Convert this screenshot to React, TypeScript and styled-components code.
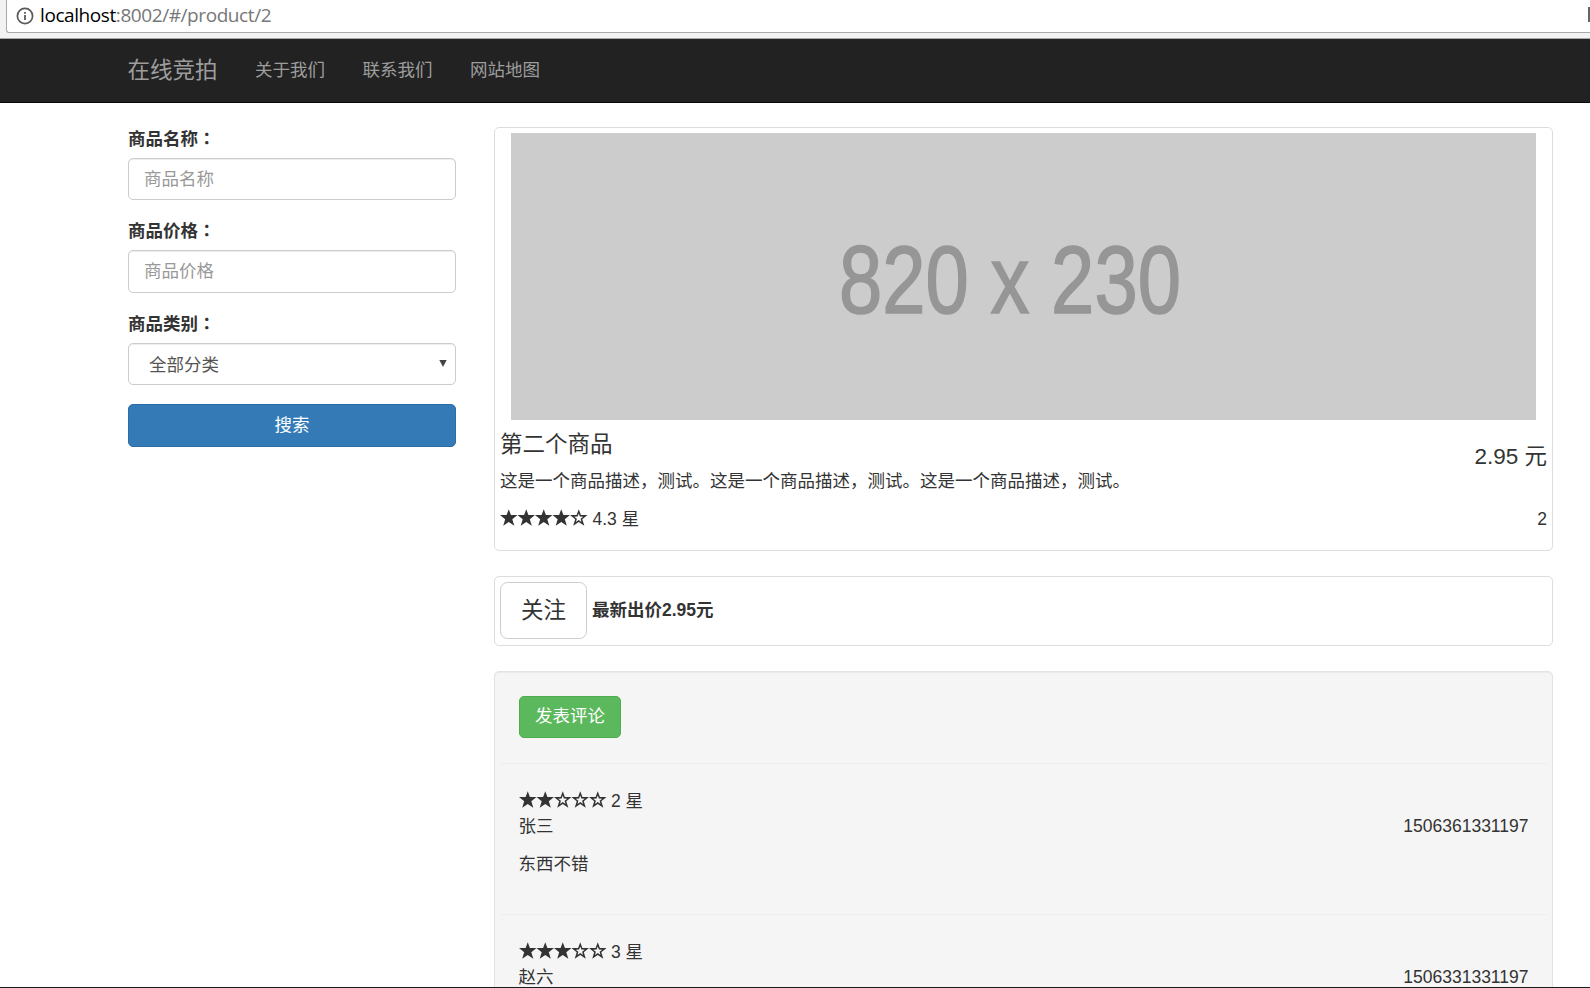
import React from "react";
import styled, { createGlobalStyle } from "styled-components";

const Global = createGlobalStyle`
  *, *::before, *::after { box-sizing: border-box; }
  html, body { margin: 0; padding: 0; height: 988px; overflow: hidden; background: #fff; }
  body, input, button {
    font-family: "Liberation Sans", "Noto Sans CJK SC", sans-serif;
    font-size: 17.5px; line-height: 25px; color: #333;
  }
`;

const Page = styled.div`
  width: 1590px; height: 988px; overflow: hidden;
  display: flex; flex-direction: column;
  border-bottom: 1px solid #1b1b1b;
`;

const BrowserBar = styled.div`
  height: 39px; flex: none; padding-left: 6px;
  background: #f2f2f2; border-bottom: 1px solid #a5a9a8;
`;
const AddressBox = styled.div`
  height: 33px; display: flex; align-items: center; justify-content: space-between;
  padding: 0 0 1px 9px; background: #fff;
  border: solid #a9a9a9; border-width: 0 0 1px 1px; border-radius: 0 0 0 3px;
`;
const Address = styled.div`
  display: flex; align-items: center; gap: 6px; height: 30px;
`;
const Url = styled.span`
  font-family: "Open Sans", sans-serif; font-size: 19px; line-height: 28px; height: 30px;
  letter-spacing: -0.42px; color: #777; white-space: nowrap;
  b { font-weight: 400; color: #000; }
`;
const EdgeIcon = styled.span`
  width: 2px; height: 15px; background: #666; margin-top: -2px;
`;

const Navbar = styled.nav`
  height: 64px; flex: none; display: flex; align-items: center;
  padding: 0 0 1px 127.5px; background: #222; border-bottom: 1px solid #080808;
  color: #9d9d9d;
`;
const Brand = styled.a`font-size: 22.5px; margin-right: 37.5px;`;
const NavLink = styled.a`margin-right: 37.5px;`;

const Main = styled.main`
  display: flex; align-items: flex-start; padding: 24px 0 0 128px; gap: 38px;
`;
const Sidebar = styled.form`width: 328px; flex: none; display: flex; flex-direction: column;`;
const Field = styled.div`
  height: 92.4px; display: flex; flex-direction: column; gap: 6px;
`;
const Label = styled.label`font-weight: 700; height: 25px;`;
const Colon = styled.span`font-family: "Noto Sans CJK TC", sans-serif; line-height: 1;`;
const Input = styled.input`
  width: 100%; height: 42.3px; padding: 7.5px 15px; color: #555; outline: none; background: #fff;
  border: 1px solid #ccc; border-radius: 5px; box-shadow: inset 0 1px 1px rgba(0,0,0,.075);
  &::placeholder { color: #999; opacity: 1; }
`;
const Select = styled.div`
  height: 42px; display: flex; align-items: center; justify-content: space-between;
  padding: 3px 8px 0 20px; color: #555; background: #fff;
  border: 1px solid #ccc; border-radius: 5px; box-shadow: inset 0 1px 1px rgba(0,0,0,.075);
  svg { margin-top: -3px; }
`;
const Button = styled.button<{ $kind: "primary" | "success" | "default" }>`
  display: block; padding: 0; flex: none; border: 1px solid; border-radius: 5px; color: #fff;
  ${({ $kind }) => $kind === "primary" && "width: 100%; height: 43px; background: #337ab7; border-color: #2e6da4;"}
  ${({ $kind }) => $kind === "success" && "width: 102px; height: 42px; padding-bottom: 1px; background: #5cb85c; border-color: #4cae4c;"}
  ${({ $kind }) => $kind === "default" && "width: 87px; height: 57px; background: #fff; border-color: #ccc; border-radius: 7.5px; color: #333; font-size: 22.5px;"}
`;

const Content = styled.section`width: 1059px; flex: none; display: flex; flex-direction: column; gap: 25px;`;
const Thumbnail = styled.article`
  height: 424px; padding: 5px; border: 1px solid #ddd; border-radius: 5px; background: #fff;
`;
const Banner = styled.svg`display: block; width: 1025px; height: 287px; margin: 0 11px;`;
const Caption = styled.div`display: flex; justify-content: space-between; padding-top: 11.5px;`;
const Title = styled.h4`margin: 0 0 12px; font-size: 22.5px; line-height: 25px; font-weight: 400;`;
const Price = styled.span`font-size: 22.5px; padding-top: 12px; height: 25px;`;
const Text = styled.p`margin: 0;`;
const RatingRow = styled.div<{ $top?: number }>`
  display: flex; align-items: center; gap: 5px; height: 25px; margin-top: ${(p) => p.$top ?? 0}px;
  > :last-child:not(:nth-child(2)) { margin-left: auto; }
`;
const StarRow = styled.svg`display: block; width: 87.5px; height: 17px; margin-top: -4px;`;

const BidBar = styled.div`
  height: 70px; display: flex; align-items: flex-start; gap: 5px; padding: 5px;
  border: 1px solid #ddd; border-radius: 5px;
`;
const Bid = styled.strong`line-height: 25px; margin-top: 16px;`;

const Well = styled.section`
  height: 420px; padding: 24px 5px; background: #f5f5f5;
  border: 1px solid #e3e3e3; border-radius: 5px; box-shadow: inset 0 1px 1px rgba(0,0,0,.05);
`;
const WellHead = styled.div`height: 67px; padding: 0 18.5px 0 19px;`;
const Comment = styled.article`
  height: 151px; padding: 25px 18.5px 0; border-top: 1px solid #eee;
`;
const Between = styled.div`display: flex; justify-content: space-between; margin-bottom: 13px;`;

const STAR = "M8.75 0.2 L10.9 6 L17.5 6 L12.3 10.3 L14.3 16.8 L8.75 12.9 L3.2 16.8 L5.2 10.3 L0 6 L6.6 6 Z";
const HOLE = "M8.75 4.4 L9.9 7.6 L13.3 7.7 L10.6 9.8 L11.5 12.9 L8.75 11.1 L6 12.9 L6.9 9.8 L4.2 7.7 L7.6 7.6 Z";

function Stars({ filled }: { filled: number }) {
  return (
    <StarRow viewBox="0 0 87.5 17" fill="#333" fillRule="evenodd">
      {[0, 1, 2, 3, 4].map((i) => (
        <path key={i} transform={`translate(${i * 17.5} 0)`} d={i < filled ? STAR : `${STAR} ${HOLE}`} />
      ))}
    </StarRow>
  );
}

const comments = [
  { stars: 2, user: "张三", time: "1506361331197", text: "东西不错" },
  { stars: 3, user: "赵六", time: "1506331331197", text: "" },
];

export default function App() {
  return (
    <Page>
      <Global />
      <BrowserBar>
        <AddressBox>
          <Address>
            <svg width="18" height="18" viewBox="0 0 18 18" fill="none" stroke="#5a5a5a">
              <circle cx="9" cy="9" r="7.6" strokeWidth="1.7" />
              <path d="M9 8v5M9 5v1.8" strokeWidth="1.8" />
            </svg>
            <Url><b>localhost</b>:8002/#/product/2</Url>
          </Address>
          <EdgeIcon />
        </AddressBox>
      </BrowserBar>
      <Navbar>
        <Brand>在线竞拍</Brand>
        <NavLink>关于我们</NavLink>
        <NavLink>联系我们</NavLink>
        <NavLink>网站地图</NavLink>
      </Navbar>
      <Main>
        <Sidebar>
          <Field><Label>商品名称<Colon lang="zh-TW">：</Colon></Label><Input placeholder="商品名称" /></Field>
          <Field><Label>商品价格<Colon lang="zh-TW">：</Colon></Label><Input placeholder="商品价格" /></Field>
          <Field>
            <Label>商品类别<Colon lang="zh-TW">：</Colon></Label>
            <Select>
              全部分类
              <svg width="8" height="7" viewBox="0 0 8 7"><path d="M0.3 0h7.4L4 7z" fill="#444" /></svg>
            </Select>
          </Field>
          <Button $kind="primary" type="button">搜索</Button>
        </Sidebar>
        <Content>
          <Thumbnail>
            <Banner viewBox="0 0 1025 287">
              <rect width="1025" height="287" fill="#ccc" />
              <text x="328" y="179.5" fontFamily="Liberation Sans" fontSize="96" fill="#969696" stroke="#969696" strokeWidth="1.6" textLength="342" lengthAdjust="spacingAndGlyphs">820 x 230</text>
            </Banner>
            <Caption>
              <div>
                <Title>第二个商品</Title>
                <Text>这是一个商品描述，测试。这是一个商品描述，测试。这是一个商品描述，测试。</Text>
              </div>
              <Price>2.95 元</Price>
            </Caption>
            <RatingRow $top={13}><Stars filled={4} /><span>4.3 星</span><span>2</span></RatingRow>
          </Thumbnail>
          <BidBar>
            <Button $kind="default" type="button">关注</Button>
            <Bid>最新出价2.95元</Bid>
          </BidBar>
          <Well>
            <WellHead><Button $kind="success" type="button">发表评论</Button></WellHead>
            {comments.map((c) => (
              <Comment key={c.time}>
                <RatingRow><Stars filled={c.stars} /><span>{c.stars} 星</span></RatingRow>
                <Between><span>{c.user}</span><span>{c.time}</span></Between>
                <Text>{c.text}</Text>
              </Comment>
            ))}
          </Well>
        </Content>
      </Main>
    </Page>
  );
}
